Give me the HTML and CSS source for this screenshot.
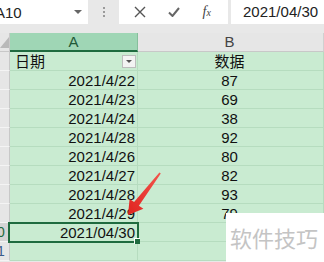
FILE: index.html
```html
<!DOCTYPE html>
<html lang="zh">
<head>
    <meta charset="UTF-8">
    <title>日期 数据</title>
    <link rel="stylesheet" href="styles.css">
</head>
<body>
    <div class="screen">
        <!-- Barre de formule -->
        <div class="toolbar">
            <div class="namebox">
                <span class="name">A10</span>
                <span class="drop"></span>
            </div>
            <div class="dots"><i></i><i></i><i></i></div>
            <div class="fxbox">
                <svg class="ico" width="12" height="12" viewBox="0 0 12 12">
                    <path d="M1 1 L11 11 M11 1 L1 11" stroke="#555" stroke-width="1.4" fill="none"/>
                </svg>
                <svg class="ico" width="12" height="10" viewBox="0 0 12 10">
                    <path d="M1 5.5 L4.5 9 L11 1" stroke="#666" stroke-width="2" fill="none"/>
                </svg>
                <span class="ico fx">f<small>x</small></span>
            </div>
            <div class="formula">2021/04/30</div>
        </div>

        <!-- Feuille -->
        <div class="sheet">
            <div class="row head">
                <div class="rh corner"><span class="tri"></span></div>
                <div class="cell a colsel">A</div>
                <div class="cell b">B</div>
            </div>
            <div class="row">
                <div class="rh"></div>
                <div class="cell a left">日期<span class="filter"></span></div>
                <div class="cell b">数据</div>
            </div>
            <div class="row"><div class="rh"></div><div class="cell a num">2021/4/22</div><div class="cell b">87</div></div>
            <div class="row"><div class="rh"></div><div class="cell a num">2021/4/23</div><div class="cell b">69</div></div>
            <div class="row"><div class="rh"></div><div class="cell a num">2021/4/24</div><div class="cell b">38</div></div>
            <div class="row"><div class="rh"></div><div class="cell a num">2021/4/28</div><div class="cell b">92</div></div>
            <div class="row"><div class="rh"></div><div class="cell a num">2021/4/26</div><div class="cell b">80</div></div>
            <div class="row"><div class="rh"></div><div class="cell a num">2021/4/27</div><div class="cell b">82</div></div>
            <div class="row"><div class="rh"></div><div class="cell a num">2021/4/28</div><div class="cell b">93</div></div>
            <div class="row"><div class="rh"></div><div class="cell a num">2021/4/29</div><div class="cell b">79</div></div>
            <div class="row"><div class="rh rsel">0</div><div class="cell a num sel">2021/04/30</div><div class="cell b"></div></div>
            <div class="row"><div class="rh rnum">1</div><div class="cell a"></div><div class="cell b"></div></div>
        </div>

        <!-- Flèche rouge -->
        <svg class="arrow" width="324" height="262" viewBox="0 0 324 262">
            <defs>
                <linearGradient id="red" x1="0" y1="1" x2="1" y2="0">
                    <stop offset="0" stop-color="#e0231f"/>
                    <stop offset="1" stop-color="#f2564c"/>
                </linearGradient>
            </defs>
            <polygon fill="url(#red)" points="159.4,172.5 134.1,202.1 129.6,199 128,215 143.4,208.8 138.9,205.7 160.8,173.6"/>
        </svg>

        <div class="mark">软件技巧</div>
    </div>
</body>
</html>
```

FILE: styles.css
```css
body {
    margin: 0;
    font-family: "Liberation Sans", "Noto Sans CJK SC", sans-serif;
    background-color: #e8e8e8;
}

.screen {
    position: relative;
    width: 324px;
    height: 262px;
    overflow: hidden;
    background: #e8e8e8;
}

/* Toolbar */
.toolbar {
    display: flex;
    height: 24px;
    margin-bottom: 9px;
}

.namebox {
    width: 88px;
    background: #fff;
    display: flex;
    align-items: center;
    justify-content: space-between;
}

.name {
    font-size: 15px;
    color: #222;
    margin-left: -5px;
}

.drop {
    width: 0;
    height: 0;
    border-left: 4px solid transparent;
    border-right: 4px solid transparent;
    border-top: 4px solid #666;
    margin-right: 6px;
}

.dots {
    width: 31px;
    display: flex;
    flex-direction: column;
    align-items: center;
    justify-content: center;
    gap: 2px;
}

.dots i {
    width: 2px;
    height: 2px;
    background: #9a9a9a;
}

.fxbox {
    width: 109px;
    background: #fff;
    display: flex;
    align-items: center;
    justify-content: space-around;
    padding: 0 6px 0 4px;
    box-sizing: border-box;
}

.ico.fx {
    font-family: "Liberation Serif", serif;
    font-style: italic;
    font-size: 14px;
    color: #444;
}

.ico.fx small {
    font-size: 10px;
}

.formula {
    flex: 1;
    margin-left: 3px;
    background: #fff;
    font-size: 15px;
    color: #222;
    line-height: 24px;
    padding-left: 12px;
}

/* Sheet */
.sheet {
    display: flex;
    flex-direction: column;
}

.row {
    display: flex;
    height: 19px;
}

.rh {
    width: 10px;
    box-sizing: border-box;
    background: #e6e6e6;
    border-bottom: 1px solid #f4f4f4;
    border-right: 1px solid #c8c8c8;
    font-size: 14px;
    line-height: 19px;
    text-indent: -3px;
    overflow: hidden;
    color: #555;
}

.rh.corner {
    position: relative;
    border-bottom: 1px solid #c8c8c8;
}

.tri {
    position: absolute;
    left: 0;
    bottom: 3px;
    width: 0;
    height: 0;
    border-left: 9px solid transparent;
    border-bottom: 11px solid #b9b9b9;
}

.rh.rsel {
    background: #d4d4d4;
    color: #1e6b3e;
}

.rh.rnum {
    color: #3b5a8a;
}

.cell {
    box-sizing: border-box;
    background: #c9ebd1;
    border-bottom: 1px solid #b6dcbf;
    border-right: 1px solid #b6dcbf;
    font-size: 15px;
    line-height: 19px;
    color: #111;
    white-space: nowrap;
}

.cell.a {
    width: 128px;
}

.cell.b {
    flex: 1;
    text-align: center;
    padding-right: 2px;
}

.head .cell {
    background: #e6e6e6;
    border-right: 1px solid #d0d0d0;
    border-bottom: 1px solid #c8c8c8;
    color: #444;
    text-align: center;
    line-height: 18px;
}

.head .cell.colsel {
    background: #9fd6b5;
    color: #1f5a38;
    border-bottom: 2px solid #1f6b3f;
    border-right: 1px solid #86bf9c;
}

.cell.left {
    padding-left: 5px;
    position: relative;
}

.cell.num {
    text-align: right;
    padding-right: 2px;
}

.filter {
    position: absolute;
    right: 1px;
    top: 3px;
    width: 14px;
    height: 13px;
    box-sizing: border-box;
    background: #f3f3f3;
    border: 1px solid #bdbdbd;
}

.filter::after {
    content: "";
    position: absolute;
    left: 3px;
    top: 4px;
    border-left: 3px solid transparent;
    border-right: 3px solid transparent;
    border-top: 3px solid #555;
}

.cell.sel {
    position: relative;
    outline: 2px solid #1f6b3f;
    outline-offset: -1px;
    margin-left: -1px;
    width: 129px;
}

.cell.sel::after {
    content: "";
    position: absolute;
    right: -3px;
    bottom: -3px;
    width: 5px;
    height: 5px;
    background: #1f6b3f;
    border: 1px solid #fff;
    border-width: 1px 0 0 1px;
}

/* Overlays */
.arrow {
    position: absolute;
    left: 0;
    top: 0;
}

.mark {
    position: absolute;
    left: 226px;
    top: 213px;
    width: 98px;
    height: 49px;
    background: #fff;
    color: #c4c4c4;
    font-family: "Noto Sans CJK SC", sans-serif;
    font-size: 22px;
    line-height: 49px;
    padding-left: 4px;
    box-sizing: border-box;
}
```
